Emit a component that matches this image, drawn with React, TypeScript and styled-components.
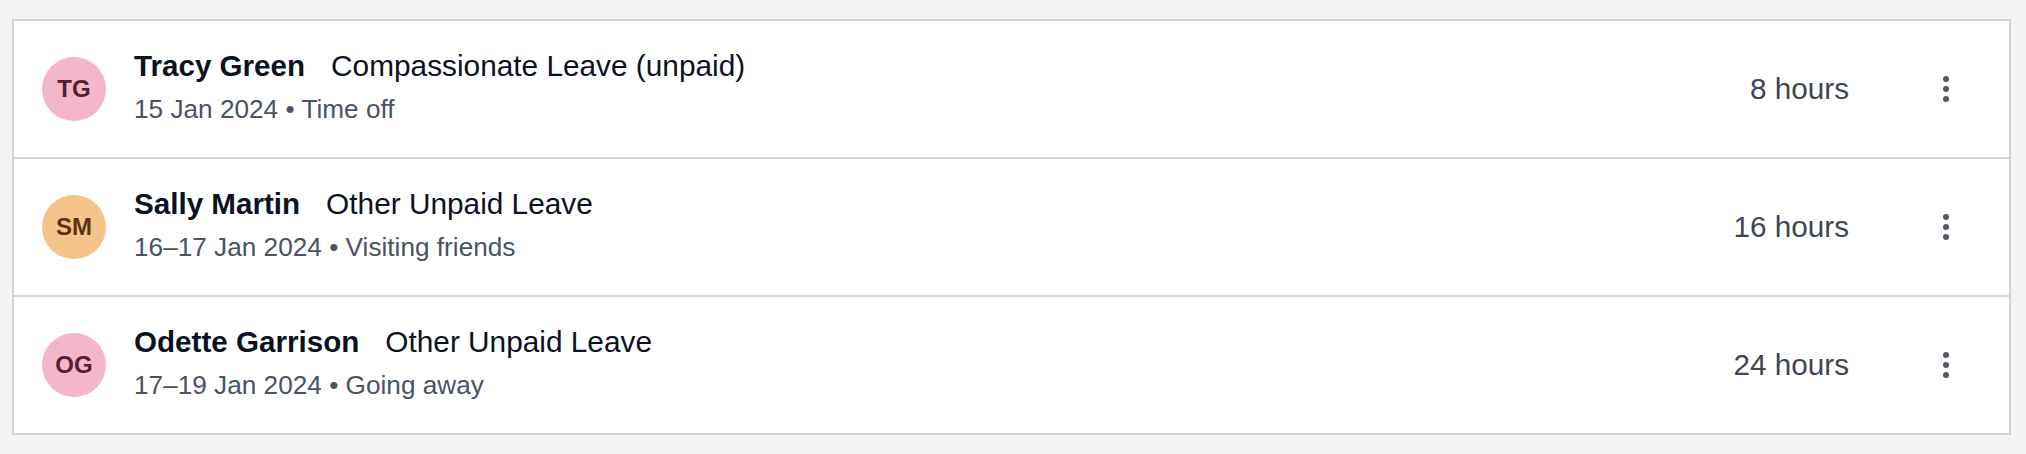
import styled, { createGlobalStyle } from 'styled-components';

const GlobalStyle = createGlobalStyle`
  body {
    margin: 0;
    background: #f2f3f5;
    font-family: "Liberation Sans", Arial, Helvetica, sans-serif;
  }
`;

const Page = styled.div`
  padding: 19px 15px 19px 12px;
`;

const Card = styled.div`
  background: #ffffff;
  border: 2px solid #d2d3d7;
`;

const Row = styled.div`
  display: flex;
  align-items: center;
  height: 136px;
  padding: 0 39px 0 28px;
  border-bottom: 2px solid #d2d3d7;
  &:last-child {
    border-bottom: none;
  }
`;

const Avatar = styled.div<{ $bg: string; $fg: string }>`
  display: flex;
  align-items: center;
  justify-content: center;
  flex: none;
  width: 64px;
  height: 64px;
  border-radius: 50%;
  background: ${(p) => p.$bg};
  color: ${(p) => p.$fg};
  font-size: 24px;
  font-weight: 700;
`;

const Info = styled.div`
  flex: 1;
  margin-left: 28px;
`;

const TitleLine = styled.div`
  display: flex;
  align-items: baseline;
  line-height: 34px;
  color: #0b1222;
`;

const Name = styled.span`
  font-size: 29.6px;
  font-weight: 700;
`;

const LeaveType = styled.span`
  margin-left: 26px;
  font-size: 29.8px;
`;

const SubLine = styled.div`
  margin-top: 6px;
  line-height: 40px;
  font-size: 26.2px;
  color: #4a5263;
`;

const Hours = styled.div`
  font-size: 29.7px;
  line-height: 30px;
  color: #3e4553;
  text-align: right;
`;

const MenuButton = styled.button`
  display: flex;
  align-items: center;
  justify-content: center;
  width: 48px;
  height: 48px;
  margin-left: 73px;
  padding: 0;
  background: transparent;
  border: none;
  cursor: pointer;
`;

type Leave = {
  initials: string;
  name: string;
  type: string;
  when: string;
  note: string;
  hours: string;
  bg: string;
  fg: string;
};

const leaves: Array<Leave> = [
  {
    initials: 'TG',
    name: 'Tracy Green',
    type: 'Compassionate Leave (unpaid)',
    when: '15 Jan 2024',
    note: 'Time off',
    hours: '8 hours',
    bg: '#f4b6ca',
    fg: '#55202f',
  },
  {
    initials: 'SM',
    name: 'Sally Martin',
    type: 'Other Unpaid Leave',
    when: '16–17 Jan 2024',
    note: 'Visiting friends',
    hours: '16 hours',
    bg: '#f5c48a',
    fg: '#5a3411',
  },
  {
    initials: 'OG',
    name: 'Odette Garrison',
    type: 'Other Unpaid Leave',
    when: '17–19 Jan 2024',
    note: 'Going away',
    hours: '24 hours',
    bg: '#f4b6ca',
    fg: '#55202f',
  },
];

function Dots() {
  return (
    <svg width="6" height="26" viewBox="0 0 6 26">
      <circle cx="3" cy="3" r="3" fill="#525a69" />
      <circle cx="3" cy="13" r="3" fill="#525a69" />
      <circle cx="3" cy="23" r="3" fill="#525a69" />
    </svg>
  );
}

export default function App() {
  return (
    <>
      <GlobalStyle />
      <Page>
        <Card>
          {leaves.map((l) => (
            <Row key={l.name}>
              <Avatar $bg={l.bg} $fg={l.fg}>
                {l.initials}
              </Avatar>
              <Info>
                <TitleLine>
                  <Name>{l.name}</Name>
                  <LeaveType>{l.type}</LeaveType>
                </TitleLine>
                <SubLine>
                  {l.when} • {l.note}
                </SubLine>
              </Info>
              <Hours>{l.hours}</Hours>
              <MenuButton aria-label="More options">
                <Dots />
              </MenuButton>
            </Row>
          ))}
        </Card>
      </Page>
    </>
  );
}
